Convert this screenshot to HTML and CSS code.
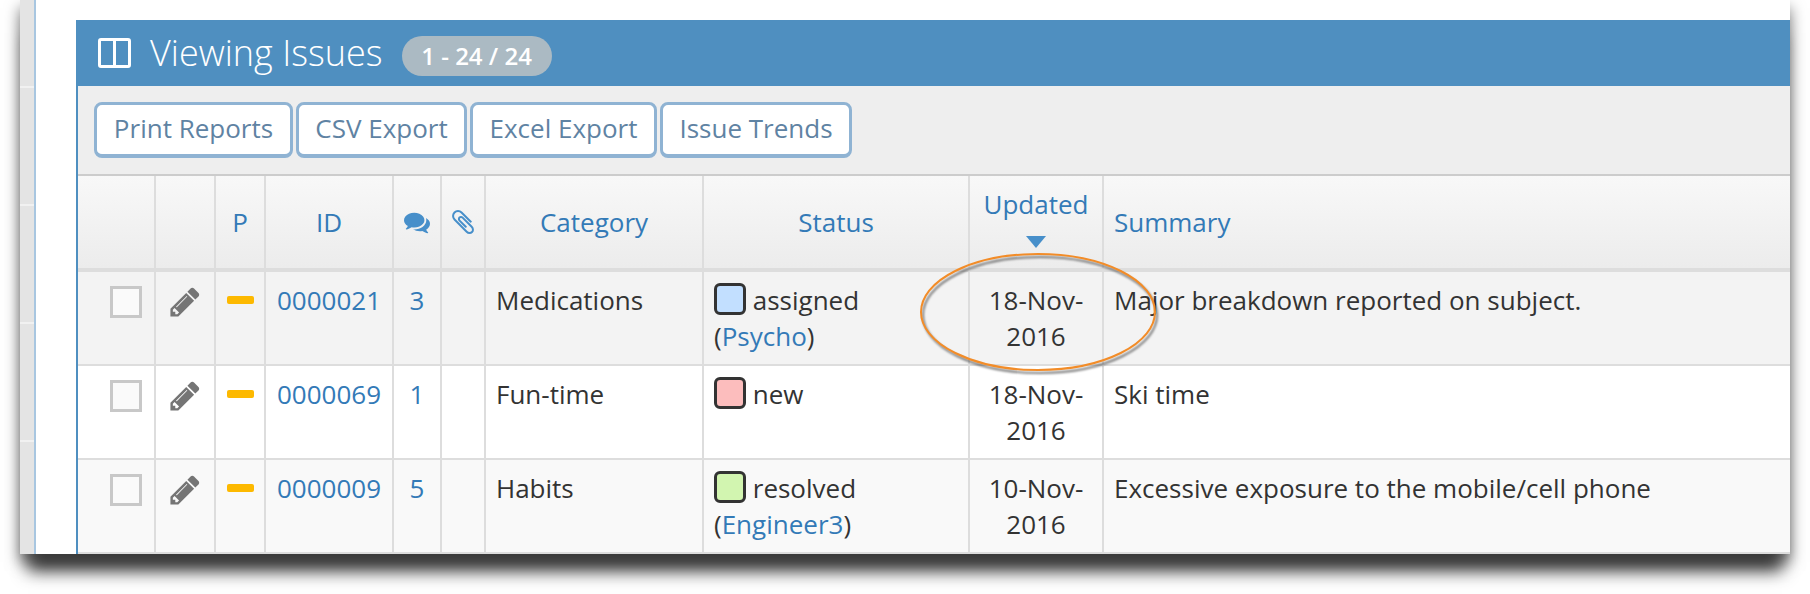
FILE: index.html
```html
<!DOCTYPE html>
<html lang="en">
<head>
    <meta charset="UTF-8">
    <title>Viewing Issues</title>
    <link rel="stylesheet" href="styles.css">
</head>
<body>
    <div class="window">
        <div class="sidebar">
            <div class="side-item first"></div>
            <div class="side-item"></div>
            <div class="side-item"></div>
            <div class="side-item"></div>
            <div class="side-item"></div>
        </div>
        <div class="content">
            <div class="panel">
                <div class="panel-header">
                    <svg class="columns-icon" viewBox="0 0 33 30"><rect x="1.5" y="1.5" width="30" height="27" rx="1.5" fill="none" stroke="#fff" stroke-width="3"/><line x1="16.5" y1="2" x2="16.5" y2="28" stroke="#fff" stroke-width="3"/></svg>
                    <h4 class="panel-title">Viewing Issues</h4>
                    <span class="badge">1 - 24 / 24</span>
                </div>
                <div class="toolbar">
                    <a class="btn btn-print">Print Reports</a>
                    <a class="btn btn-csv">CSV Export</a>
                    <a class="btn btn-excel">Excel Export</a>
                    <a class="btn btn-trends">Issue Trends</a>
                </div>
                <table class="issues">
                    <colgroup>
                        <col class="c-check"><col class="c-edit"><col class="c-prio"><col class="c-id"><col class="c-notes"><col class="c-files"><col class="c-cat"><col class="c-status"><col class="c-upd"><col class="c-sum">
                    </colgroup>
                    <thead>
                        <tr>
                            <th></th>
                            <th></th>
                            <th><a>P</a></th>
                            <th><a>ID</a></th>
                            <th class="icon-cell"><svg class="head-icon comments" viewBox="0 0 1792 1792"><path d="M1408 768q0 139-94 257t-256.5 186.5-353.5 68.5q-86 0-176-16-124 88-278 128-36 9-86 16h-3q-11 0-20.5-8t-11.5-21q-1-3-1-6.5t.5-6.5 2-6l2.5-5 3.5-5.5 4-5 4.5-5 4-4.5q5-6 23-25t26-29.5 22.5-29 25-38.5 20.5-44q-124-72-195-177t-71-224q0-139 94-257t256.5-186.5 353.5-68.5 353.5 68.5 256.5 186.5 94 257zm384 256q0 120-71 224.5t-195 176.5q10 24 20.5 44t25 38.5 22.5 29 26 29.5 23 25q1 1 4 4.5t4.5 5 4 5 3.5 5.5l2.5 5 2 6 .5 6.5-1 6.5q-3 14-13 22t-22 7q-50-7-86-16-154-40-278-128-90 16-176 16-271 0-472-132 58 4 88 4 161 0 309-45t264-129q125-92 192-212t67-254q0-77-23-152 129 71 204 178t75 230z"/></svg></th>
                            <th class="icon-cell"><svg class="head-icon clip" viewBox="0 0 1792 1792"><path d="M1596 1385q0 117-79 196t-196 79q-135 0-235-100l-777-776q-113-115-113-271 0-159 110-270t269-111q158 0 273 113l605 606q10 10 10 22 0 16-30.5 46.5t-46.5 30.5q-13 0-23-10l-606-607q-79-77-181-77-106 0-179 75t-73 181q0 105 76 181l776 777q63 63 145 63 64 0 106-42t42-106q0-82-63-145l-581-581q-26-24-60-24-29 0-48 19t-19 48q0 32 25 59l410 410q10 10 10 22 0 16-31 47t-47 31q-12 0-22-10l-410-410q-63-61-63-149 0-82 57-139t139-57q88 0 149 63l581 581q100 98 100 235z"/></svg></th>
                            <th><a>Category</a></th>
                            <th><a>Status</a></th>
                            <th class="sorted"><a>Updated</a><span class="sort-arrow"></span></th>
                            <th class="left"><a>Summary</a></th>
                        </tr>
                    </thead>
                    <tbody>
                        <tr class="row-hover">
                            <td class="right"><span class="check"></span></td>
                            <td class="center"><svg class="pencil" viewBox="0 0 1792 1792"><path d="M491 1536l91-91-235-235-91 91v107h128v128h107zm523-928q0-22-22-22-10 0-17 7l-542 542q-7 7-7 17 0 22 22 22 10 0 17-7l542-542q7-7 7-17zm-54-192l416 416-832 832h-416v-416zm683 96q0 53-37 90l-166 166-416-416 166-165q36-38 90-38 53 0 91 38l235 234q37 39 37 91z"/></svg></td>
                            <td class="center"><span class="prio"></span></td>
                            <td class="center"><a>0000021</a></td>
                            <td class="center"><a>3</a></td>
                            <td></td>
                            <td>Medications</td>
                            <td><span class="swatch assigned"></span> assigned<br>(<a>Psycho</a>)</td>
                            <td class="center">18-Nov-2016</td>
                            <td>Major breakdown reported on subject.</td>
                        </tr>
                        <tr>
                            <td class="right"><span class="check"></span></td>
                            <td class="center"><svg class="pencil" viewBox="0 0 1792 1792"><path d="M491 1536l91-91-235-235-91 91v107h128v128h107zm523-928q0-22-22-22-10 0-17 7l-542 542q-7 7-7 17 0 22 22 22 10 0 17-7l542-542q7-7 7-17zm-54-192l416 416-832 832h-416v-416zm683 96q0 53-37 90l-166 166-416-416 166-165q36-38 90-38 53 0 91 38l235 234q37 39 37 91z"/></svg></td>
                            <td class="center"><span class="prio"></span></td>
                            <td class="center"><a>0000069</a></td>
                            <td class="center"><a>1</a></td>
                            <td></td>
                            <td>Fun-time</td>
                            <td><span class="swatch new"></span> new</td>
                            <td class="center">18-Nov-2016</td>
                            <td>Ski time</td>
                        </tr>
                        <tr class="row-odd">
                            <td class="right"><span class="check"></span></td>
                            <td class="center"><svg class="pencil" viewBox="0 0 1792 1792"><path d="M491 1536l91-91-235-235-91 91v107h128v128h107zm523-928q0-22-22-22-10 0-17 7l-542 542q-7 7-7 17 0 22 22 22 10 0 17-7l542-542q7-7 7-17zm-54-192l416 416-832 832h-416v-416zm683 96q0 53-37 90l-166 166-416-416 166-165q36-38 90-38 53 0 91 38l235 234q37 39 37 91z"/></svg></td>
                            <td class="center"><span class="prio"></span></td>
                            <td class="center"><a>0000009</a></td>
                            <td class="center"><a>5</a></td>
                            <td></td>
                            <td>Habits</td>
                            <td><span class="swatch resolved"></span> resolved<br>(<a>Engineer3</a>)</td>
                            <td class="center">10-Nov-2016</td>
                            <td>Excessive exposure to the mobile/cell phone</td>
                        </tr>
                    </tbody>
                </table>
            </div>
        </div>
        <svg class="annotation" viewBox="0 0 250 130"><ellipse cx="122" cy="62" rx="117" ry="58" fill="none" stroke="#f28c28" stroke-width="2"/></svg>
    </div>
</body>
</html>
```

FILE: styles.css
```css
* {
    box-sizing: border-box;
}

body {
    margin: 0;
    padding: 0 20px;
    height: 594px;
    overflow: hidden;
    background-color: #fff;
    font-family: "Open Sans", Arial, sans-serif;
    font-size: 26px;
    line-height: 36px;
    color: #333;
}

.window {
    position: relative;
    display: flex;
    height: 554px;
    background-color: #fff;
    box-shadow: 0 25px 16px -8px #3a3a3a, 0 8px 14px rgba(0, 0, 0, 0.55);
}

.sidebar {
    width: 16px;
    flex: none;
    background-color: #e4e4e4;
    border-right: 2px solid #a8c6e0;
    overflow: hidden;
}

.side-item {
    height: 118px;
    border-bottom: 2px solid #f1f1f1;
}

.side-item.first {
    height: 88px;
}

.content {
    flex: 1;
    min-width: 0;
    padding: 20px 0 0 40px;
}

.panel {
    height: 534px;
    border-left: 2px solid #4f8fc0;
}

.panel-header {
    display: flex;
    align-items: center;
    height: 66px;
    margin-left: -2px;
    padding-left: 22px;
    background-color: #4f8fc0;
    color: #fff;
}

.columns-icon {
    width: 33px;
    height: 30px;
    margin-right: 19px;
}

.panel-title {
    margin: 0 19px 0 0;
    font-size: 36px;
    font-weight: 300;
    line-height: 44px;
}

.badge {
    width: 150px;
    height: 40px;
    margin-top: 6px;
    border-radius: 20px;
    background-color: #abbac3;
    font-size: 24px;
    font-weight: 600;
    line-height: 40px;
    text-align: center;
}

.toolbar {
    display: flex;
    gap: 3px;
    height: 90px;
    padding: 16px 0 0 16px;
    background-color: #eee;
    border-bottom: 2px solid #ccc;
}

.btn {
    display: block;
    height: 56px;
    border: 3px solid #8fb3d3;
    border-bottom-width: 4px;
    border-radius: 8px;
    background-color: #fff;
    color: #5f83a3;
    line-height: 46px;
    text-align: center;
}

.btn-print {
    width: 199px;
}

.btn-csv {
    width: 171px;
}

.btn-excel {
    width: 187px;
}

.btn-trends {
    width: 192px;
}

.issues {
    width: 1712px;
    table-layout: fixed;
    border-collapse: separate;
    border-spacing: 0;
}

.c-check { width: 78px; }
.c-edit { width: 60px; }
.c-prio { width: 50px; }
.c-id { width: 128px; }
.c-notes { width: 48px; }
.c-files { width: 44px; }
.c-cat { width: 218px; }
.c-status { width: 266px; }
.c-upd { width: 134px; }
.c-sum { width: 686px; }

.issues a {
    color: #337ab7;
}

.issues th {
    height: 96px;
    padding: 0 10px;
    background: linear-gradient(to bottom, #f8f8f8, #ececec);
    border-right: 2px solid #ddd;
    border-bottom: 4px solid #ddd;
    font-weight: 500;
    text-align: center;
    vertical-align: middle;
}

.issues th.left {
    text-align: left;
}

.issues th.sorted {
    padding-bottom: 10px;
}

.issues th.icon-cell {
    padding: 0;
}

.sort-arrow {
    display: block;
    width: 0;
    height: 0;
    margin: 14px auto 0;
    border-left: 10px solid transparent;
    border-right: 10px solid transparent;
    border-top: 12px solid #478fca;
}

.head-icon {
    display: block;
    margin: 0 auto;
    fill: #478fca;
}

.head-icon.comments {
    width: 26px;
    height: 26px;
}

.head-icon.clip {
    width: 28px;
    height: 28px;
}

.issues td {
    height: 94px;
    padding: 10px 10px;
    border-right: 2px solid #ddd;
    border-bottom: 2px solid #ddd;
    background-color: #fff;
    vertical-align: top;
}

.issues th:last-child,
.issues td:last-child {
    border-right: 0;
}

.row-hover td {
    background-color: #f3f3f3;
}

.issues .row-odd td {
    background-color: #f9f9f9;
}

.issues td.center {
    text-align: center;
}

.issues td.right {
    text-align: right;
    padding-right: 12px;
}

.check {
    display: block;
    width: 32px;
    height: 32px;
    margin: 4px 0 0 auto;
    border: 3px solid #c8c8c8;
    background-color: #fafafa;
}

.pencil {
    display: block;
    width: 34px;
    height: 34px;
    margin: 3px auto 0;
    fill: #757575;
}

.prio {
    display: block;
    width: 27px;
    height: 8px;
    margin: 14px auto 0;
    border-radius: 2px;
    background-color: #fdb900;
}

.swatch {
    display: inline-block;
    width: 32px;
    height: 32px;
    border: 3px solid #333;
    border-radius: 6px;
    vertical-align: -5px;
}

.swatch.assigned {
    background-color: #c2dfff;
}

.swatch.new {
    background-color: #fcbdbd;
}

.swatch.resolved {
    background-color: #d2f5b0;
}

/* orange ring drawn on top of the screenshot */
.annotation {
    position: absolute;
    left: 896px;
    top: 250px;
    width: 250px;
    height: 130px;
    filter: drop-shadow(2px 3px 1px rgba(0, 0, 0, 0.5));
}
```
